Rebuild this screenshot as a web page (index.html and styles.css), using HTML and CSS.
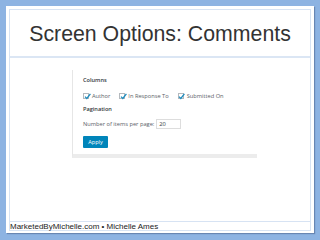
FILE: index.html
```html
<!DOCTYPE html>
<html lang="en">
<head>
    <meta charset="UTF-8">
    <title>Screen Options: Comments</title>
    <link rel="stylesheet" href="styles.css">
</head>
<body>
    <div class="slide">
        <div class="frame">
            <h1 class="title">Screen Options: Comments</h1>

            <div class="content">
                <div class="panel">
                    <h5>Columns</h5>
                    <div class="columns">
                        <label class="check">
                            <span class="box"><svg width="7" height="7" viewBox="0 0 7 7"><path d="M1 3.6 L2.8 5.4 L6.4 0.8" fill="none" stroke="#1e8cbe" stroke-width="1.3"/></svg></span>
                            Author
                        </label>
                        <label class="check">
                            <span class="box"><svg width="7" height="7" viewBox="0 0 7 7"><path d="M1 3.6 L2.8 5.4 L6.4 0.8" fill="none" stroke="#1e8cbe" stroke-width="1.3"/></svg></span>
                            In Response To
                        </label>
                        <label class="check">
                            <span class="box"><svg width="7" height="7" viewBox="0 0 7 7"><path d="M1 3.6 L2.8 5.4 L6.4 0.8" fill="none" stroke="#1e8cbe" stroke-width="1.3"/></svg></span>
                            Submitted On
                        </label>
                    </div>

                    <h5 class="second">Pagination</h5>
                    <div class="perpage">
                        <span>Number of items per page:</span>
                        <span class="field">20</span>
                    </div>

                    <button class="apply" type="button">Apply</button>
                </div>
            </div>

            <div class="footer">MarketedByMichelle.com &bull; Michelle Ames</div>
        </div>
    </div>
</body>
</html>
```

FILE: styles.css
```css
/* Slide frame */
body {
    margin: 0;
    background: #8db3e2;
    font-family: "Liberation Sans", Arial, sans-serif;
}

.slide {
    margin: 6px;
    width: 308px;
    height: 227px;
    padding: 3px 3px 2px 3px;
    box-sizing: border-box;
    background: #ffffff;
    box-shadow: 1px 1px 1px rgba(60, 80, 120, 0.45);
}

.frame {
    height: 100%;
    box-sizing: border-box;
    border: 1px solid #d7e3f3;
    display: flex;
    flex-direction: column;
}

.title {
    margin: 0;
    height: 46px;
    line-height: 48px;
    text-align: center;
    font-weight: normal;
    font-size: 21.3px;
    color: #333333;
    border-bottom: 2px solid #dbe6f4;
}

.content {
    flex: 1;
    padding: 12px 0 0 62px;
}

.footer {
    border-top: 1px solid #d7e3f3;
    font-size: 8px;
    line-height: 9px;
    height: 8px;
    color: #222222;
}

/* Screen options panel */
.panel {
    width: 185px;
    box-sizing: border-box;
    border-left: 1px solid #e6e6e6;
    border-bottom: 4px solid #ececec;
    padding: 7px 0 6px 10px;
    font-family: "Open Sans", sans-serif;
    font-size: 5.7px;
    color: #5b6168;
}

.panel h5 {
    margin: 0;
    font-size: 5.6px;
    line-height: 7px;
    font-weight: 600;
    color: #32373c;
}

.panel h5.second {
    margin-top: 6px;
}

.columns {
    display: flex;
    gap: 9px;
    margin-top: 8px;
    height: 8px;
    align-items: center;
}

.check {
    display: flex;
    align-items: center;
    gap: 3px;
}

.box {
    width: 6px;
    height: 6px;
    border: 1px solid #b4b9be;
    box-sizing: border-box;
    position: relative;
    background: #ffffff;
}

.box svg {
    position: absolute;
    left: -0.5px;
    top: -1.5px;
}

.perpage {
    display: flex;
    align-items: center;
    gap: 2px;
    margin-top: 6px;
}

.field {
    width: 25px;
    height: 10px;
    box-sizing: border-box;
    border: 1px solid #dddddd;
    padding-left: 2px;
    line-height: 8px;
    color: #32373c;
}

.apply {
    display: block;
    margin-top: 7px;
    width: 25px;
    height: 12px;
    padding: 0;
    border: none;
    border-radius: 1px;
    background: #0085ba;
    color: #ffffff;
    font-family: "Open Sans", sans-serif;
    font-size: 5.6px;
}
```
